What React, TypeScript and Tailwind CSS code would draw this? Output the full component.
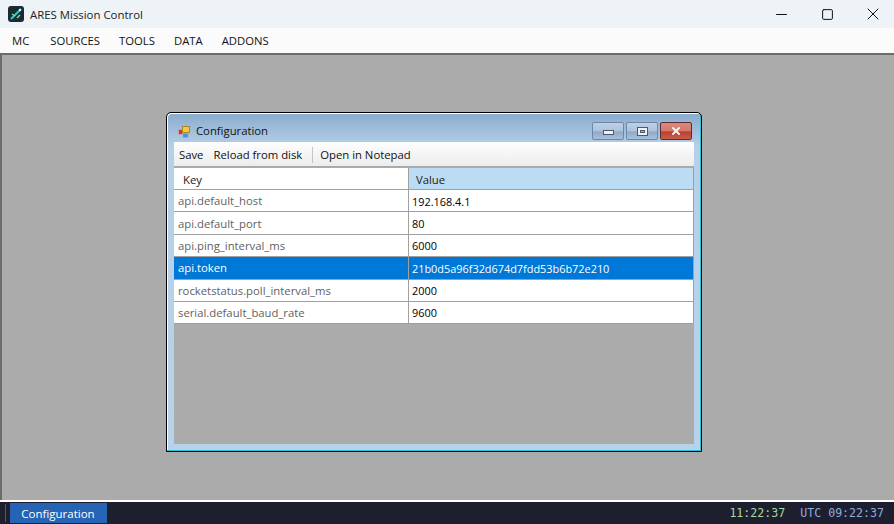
import { Minus, Square, X } from 'lucide-react';

const rows = [
    { key: 'api.default_host', value: '192.168.4.1' },
    { key: 'api.default_port', value: '80' },
    { key: 'api.ping_interval_ms', value: '6000' },
    { key: 'api.token', value: '21b0d5a96f32d674d7fdd53b6b72e210', selected: true },
    { key: 'rocketstatus.poll_interval_ms', value: '2000' },
    { key: 'serial.default_baud_rate', value: '9600' },
];

function AppIcon() {
    return (
        <svg width="16" height="16" viewBox="0 0 16 16">
            <rect x="0" y="0" width="16" height="16" rx="3" fill="#1c2a33" />
            <path d="M3 13 L8 8 L13 3" stroke="#37c6c0" strokeWidth="2" fill="none" />
            <path d="M4 8 L7 10 M9 12 L12 9" stroke="#7fe08a" strokeWidth="1.5" fill="none" />
            <circle cx="12" cy="4" r="1.2" fill="#e8f4f4" />
        </svg>
    );
}

function FormIcon() {
    return (
        <svg width="14" height="14" viewBox="0 0 14 14">
            <rect x="0.5" y="4.5" width="4" height="5" fill="#d8342a" stroke="#b9a9a9" strokeWidth="1" />
            <rect x="4.5" y="1.5" width="7" height="6" fill="#f6c93c" stroke="#a8862a" strokeWidth="1" />
            <rect x="5" y="8.5" width="5" height="4" fill="#4a8fe0" stroke="#9ab" strokeWidth="0.5" />
        </svg>
    );
}

function CaptionButton({ kind }: { kind: 'min' | 'max' | 'close' }) {
    if (kind === 'close') {
        return (
            <div className="flex h-[18px] w-[32px] items-center justify-center rounded-[2px] border border-[#5d2a35] bg-[linear-gradient(#dc8a7c_0%,#d47868_50%,#b8402a_55%,#c9604c_100%)]">
                <X size={12} strokeWidth={4} className="text-[#f4f4f4]" />
            </div>
        );
    }
    return (
        <div className="flex h-[18px] w-[32px] items-center justify-center rounded-[2px] border border-[#6f87a6] bg-[linear-gradient(#bcd0e6_0%,#aec4dc_50%,#8fa9c6_55%,#a8c0da_100%)]">
            {kind === 'min' ? (
                <div className="mt-[3px] h-[5px] w-[11px] border border-[#4a5870] bg-[#eef0f4]" />
            ) : (
                <div className="flex h-[9px] w-[11px] items-center justify-center border border-[#4a5870] bg-[#eef0f4]">
                    <div className="h-[3px] w-[5px] border border-[#4a5870] bg-[#9fb4cc]" />
                </div>
            )}
        </div>
    );
}

export default function App() {
    return (
        <div className="flex h-[524px] w-[894px] flex-col overflow-hidden bg-[#ababab] font-['Open_Sans','Noto_Sans',sans-serif] text-[11.3px] text-[#1a1a1a]">
            {/* title bar */}
            <div className="flex h-[28px] items-center bg-[#eef3f8] pl-[8px]">
                <AppIcon />
                <span className="ml-[6px] pt-[1px] text-[11.4px] text-[#222]">ARES Mission Control</span>
                <div className="ml-auto mr-[-2px] flex items-center text-[#111]">
                    <div className="flex w-[46px] justify-center">
                        <Minus size={17} strokeWidth={1} absoluteStrokeWidth />
                    </div>
                    <div className="flex w-[46px] justify-center">
                        <Square size={13} strokeWidth={1} absoluteStrokeWidth />
                    </div>
                    <div className="flex w-[46px] justify-center">
                        <X size={20} strokeWidth={1} absoluteStrokeWidth />
                    </div>
                </div>
            </div>

            {/* menu */}
            <div className="flex h-[25px] items-center gap-[19px] bg-[#fbfbfb] pl-[12px] pt-[2px] text-[11.3px] text-[#111]">
                <span className="mr-[2px]">MC</span>
                <span>SOURCES</span>
                <span>TOOLS</span>
                <span>DATA</span>
                <span>ADDONS</span>
            </div>

            {/* mdi area */}
            <div className="relative flex-1 border-t-2 border-l-2 border-[#6c6c6c] bg-[#ababab]">
                {/* child window */}
                <div className="absolute left-[164px] top-[57px] flex h-[340px] w-[536px] flex-col rounded-t-[5px] border border-black bg-[linear-gradient(#8aabcd_0%,#b6d0ea_10%,#b8d2ec_100%)] shadow-[inset_-1px_-1px_0_#27c4dc,inset_1px_1px_0_#ffffff]">
                    <div className="relative flex h-[29px] items-center pl-[11px] pt-[8px]">
                        <FormIcon />
                        <span className="ml-[4px] text-[#111]">Configuration</span>
                        <div className="absolute right-[9px] top-[9px] flex gap-[2px]">
                            <CaptionButton kind="min" />
                            <CaptionButton kind="max" />
                            <CaptionButton kind="close" />
                        </div>
                    </div>

                    <div className="mx-[7px] mb-[7px] flex flex-1 flex-col bg-[#ababab]">
                        {/* toolbar */}
                        <div className="flex h-[25px] items-center border-b border-[#a8a8a8] bg-[linear-gradient(#fefefe,#ececec)] pl-[5px] text-[#111]">
                            <span className="pt-[3px]">Save</span>
                            <span className="ml-[10px] pt-[3px]">Reload from disk</span>
                            <div className="ml-[10px] mr-[7px] mt-[2px] h-[16px] w-px bg-[#c4c4c4]" />
                            <span className="pt-[3px]">Open in Notepad</span>
                        </div>

                        {/* grid */}
                        <div className="grid grid-cols-[234px_285px] border-r border-[#a0a0a0] pt-px">
                            <div className="flex h-[22px] items-center border-b border-[#a0a0a0] bg-white pl-[9px] pt-[3px]">Key</div>
                            <div className="flex h-[22px] items-center border-b border-l border-[#a0a0a0] bg-[#bcdcf4] pl-[7px] pt-[3px]">Value</div>
                            {rows.map(row => (
                                <div key={row.key} className="contents">
                                    <div
                                        className={`flex h-[22.4px] items-center border-b border-[#a0a0a0] pl-[4px] pt-[2px] ${row.selected ? 'bg-[#0078d7] text-white' : 'bg-white text-[#5f5f5f]'}`}
                                    >
                                        {row.key}
                                    </div>
                                    <div
                                        className={`flex h-[22.4px] items-center border-b border-l border-[#a0a0a0] pl-[3px] pt-[2px] text-[10.9px] ${row.selected ? 'bg-[#0078d7] text-white' : 'bg-white text-black'}`}
                                    >
                                        {row.value}
                                    </div>
                                </div>
                            ))}
                        </div>
                    </div>
                </div>
            </div>

            {/* task strip */}
            <div className="h-[2px] bg-white" />
            <div className="flex h-[22px] items-center bg-[#1e1f2e]">
                <div className="ml-[5px] h-[18px] w-px bg-[#55566a]" />
                <div className="ml-[4px] flex h-[20px] w-[97px] items-center justify-center bg-[#2563b5] pt-[1px] pr-[1px] text-[11.5px] text-white">
                    Configuration
                </div>
                <div className="ml-auto flex pr-[10px] pt-[1px] font-['DejaVu_Sans_Mono','Liberation_Mono',monospace] text-[11.6px]">
                    <span className="text-[#a6d89f]">11:22:37</span>
                    <span className="ml-[15px] text-[#8aaee0]">UTC 09:22:37</span>
                </div>
            </div>
        </div>
    );
}
